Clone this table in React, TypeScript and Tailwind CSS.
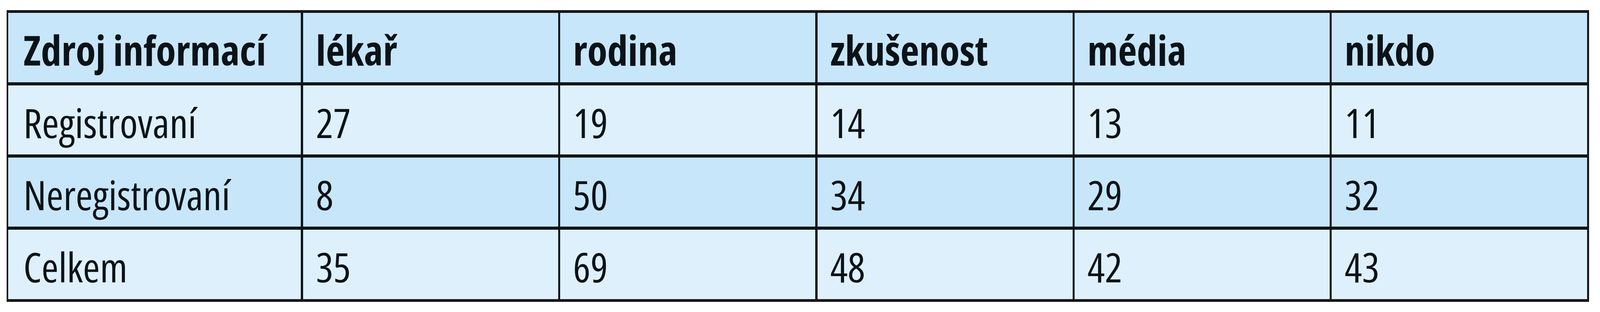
const header = ['Zdroj informací', 'lékař', 'rodina', 'zkušenost', 'média', 'nikdo'];

const rows = [
  ['Registrovaní', '27', '19', '14', '13', '11'],
  ['Neregistrovaní', '8', '50', '34', '29', '32'],
  ['Celkem', '35', '69', '48', '42', '43'],
];

function Cell({ text, first, bold, dark }: { text: string; first?: boolean; bold?: boolean; dark?: boolean }) {
  return (
    <div
      className={`${dark ? 'bg-[#c8e6fa]' : 'bg-[#dff0fd]'} ${first ? 'pl-[0.94vw]' : 'pl-[0.8vw]'} pt-[42px] text-[105px] leading-[105px] text-[#0b1318] whitespace-nowrap ${bold ? 'font-bold' : 'font-normal'}`}
    >
      {text}
    </div>
  );
}

export default function App() {
  return (
    <div className="bg-white w-full h-[800px] pt-[26px] pl-[0.424vw] pr-[0.685vw] font-['Open_Sans',sans-serif] font-stretch-condensed">
      <div className="grid grid-cols-[1121fr_977fr_977fr_977fr_977fr_978fr] grid-rows-[178px_177px_177px_178px] gap-y-[8px] gap-x-[0.135vw] bg-[#0b151b] border-[#161616] border-y-[7px] border-l-[0.12vw] border-r-[0.13vw]">
        {header.map((h, i) => (
          <Cell key={h} text={h} first={i === 0} bold dark />
        ))}
        {rows.map((r, ri) =>
          r.map((c, ci) => <Cell key={`${ri}-${ci}`} text={c} first={ci === 0} dark={ri === 1} />)
        )}
      </div>
    </div>
  );
}
